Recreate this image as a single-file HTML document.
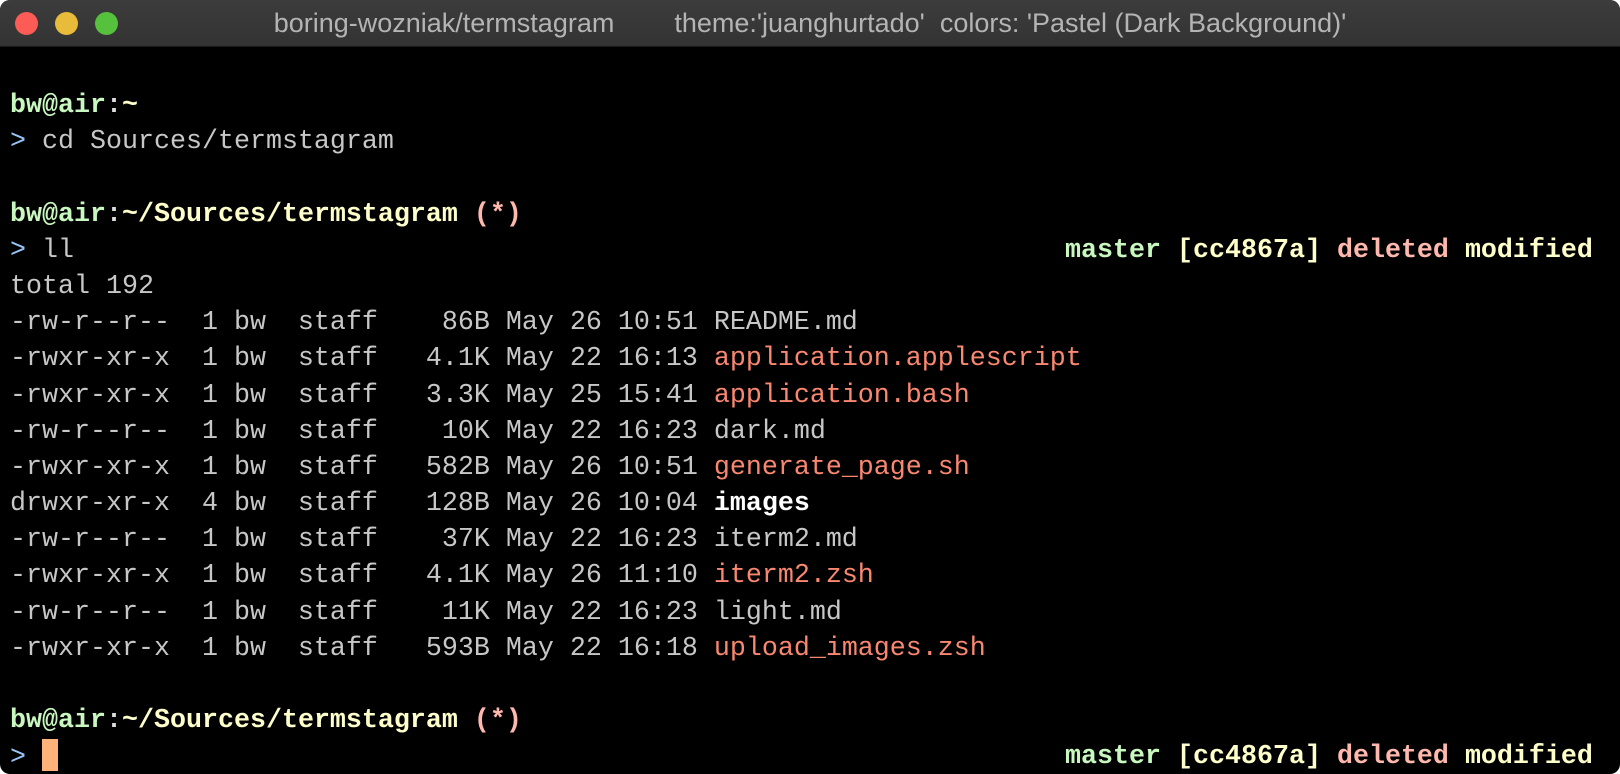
<!DOCTYPE html>
<html><head><meta charset="utf-8"><style>
html,body{margin:0;padding:0;background:#fff;width:1620px;height:774px;overflow:hidden}
.win{position:absolute;left:0;top:0;width:1620px;height:774px;background:#000;border-radius:10px;overflow:hidden}
.tb{position:absolute;left:0;top:0;width:1620px;height:46px;background:linear-gradient(#3c3c3c,#333);border-bottom:1px solid #1a1a1a}
.dot{position:absolute;top:12px;width:23px;height:23px;border-radius:50%}
.title{position:absolute;left:0;right:0;top:0;text-align:center;color:#b4b4b4;font:27px "Liberation Sans",sans-serif;line-height:46px;white-space:pre}
.term{position:absolute;left:10px;top:88px;font-family:"Liberation Mono",monospace;font-size:26.67px;line-height:36.2px;color:#c7c7c7}
.l{height:36.2px;position:relative;white-space:pre}
b{font-weight:bold}
.g{color:#c8f7c0}.y{color:#fefecb}.p{color:#ffb8ad}.bl{color:#97c6f6}.x{color:#fa8770}.w{color:#fff}.c{color:#dcdcdc}
.r{position:absolute;left:1055px;top:0}
.cur{display:inline-block;width:16px;height:32px;background:#ffb37a;vertical-align:-7px}
</style></head><body><div class="win">
<div class="tb">
<div class="dot" style="left:15px;background:#fc5c55"></div>
<div class="dot" style="left:55px;background:#e8bc3a"></div>
<div class="dot" style="left:95px;background:#55c13c"></div>
<div class="title">boring-wozniak/termstagram        theme:'juanghurtado'  colors: 'Pastel (Dark Background)'</div>
</div>
<div class="term"><div class="l"><b class="g">bw@air</b><b class="c">:</b><b class="y">~</b></div><div class="l"><span class="bl">&gt;</span> cd Sources/termstagram</div><div class="l"></div><div class="l"><b class="g">bw@air</b><b class="c">:</b><b class="y">~/Sources/termstagram</b> <b class="p">(*)</b></div><div class="l"><span class="bl">&gt;</span> ll<span class="r"><b class="g">master</b> <b class="y">[cc4867a]</b> <b class="p">deleted</b> <b class="y">modified</b></span></div><div class="l">total 192</div><div class="l">-rw-r--r--  1 bw  staff    86B May 26 10:51 README.md</div><div class="l">-rwxr-xr-x  1 bw  staff   4.1K May 22 16:13 <span class="x">application.applescript</span></div><div class="l">-rwxr-xr-x  1 bw  staff   3.3K May 25 15:41 <span class="x">application.bash</span></div><div class="l">-rw-r--r--  1 bw  staff    10K May 22 16:23 dark.md</div><div class="l">-rwxr-xr-x  1 bw  staff   582B May 26 10:51 <span class="x">generate_page.sh</span></div><div class="l">drwxr-xr-x  4 bw  staff   128B May 26 10:04 <b class="w">images</b></div><div class="l">-rw-r--r--  1 bw  staff    37K May 22 16:23 iterm2.md</div><div class="l">-rwxr-xr-x  1 bw  staff   4.1K May 26 11:10 <span class="x">iterm2.zsh</span></div><div class="l">-rw-r--r--  1 bw  staff    11K May 22 16:23 light.md</div><div class="l">-rwxr-xr-x  1 bw  staff   593B May 22 16:18 <span class="x">upload_images.zsh</span></div><div class="l"></div><div class="l"><b class="g">bw@air</b><b class="c">:</b><b class="y">~/Sources/termstagram</b> <b class="p">(*)</b></div><div class="l"><span class="bl">&gt;</span> <span class="cur"></span><span class="r"><b class="g">master</b> <b class="y">[cc4867a]</b> <b class="p">deleted</b> <b class="y">modified</b></span></div></div>
</div></body></html>
